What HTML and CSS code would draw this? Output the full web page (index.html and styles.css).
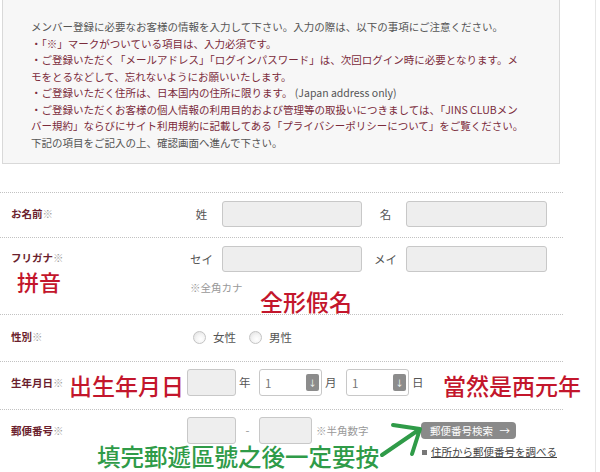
FILE: index.html
```html
<!DOCTYPE html>
<html lang="ja">

<head>
    <meta charset="UTF-8" />
    <title>会員登録</title>
    <link rel="stylesheet" href="styles.css">
</head>

<body>
    <div class="page">
        <div class="main">
            <div class="notice">
                <p class="notice-text">
                    メンバー登録に必要なお客様の情報を入力して下さい。入力の際は、以下の事項にご注意ください。<br>
                    <span class="warn">・「※」マークがついている項目は、入力必須です。</span><br>
                    <span class="warn">・ご登録いただく「メールアドレス」「ログインパスワード」は、次回ログイン時に必要となります。メ</span><br>
                    <span class="warn">モをとるなどして、忘れないようにお願いいたします。</span><br>
                    <span class="warn">・ご登録いただく住所は、日本国内の住所に限ります。</span>&nbsp;(Japan address only)<br>
                    <span class="warn">・ご登録いただくお客様の個人情報の利用目的および管理等の取扱いにつきましては、「JINS CLUBメン</span><br>
                    <span class="warn">バー規約」ならびにサイト利用規約に記載してある「プライバシーポリシーについて」をご覧ください。</span><br>
                    下記の項目をご記入の上、確認画面へ進んで下さい。
                </p>
            </div>

            <div class="form">
                <!-- name -->
                <div class="row row-name">
                    <div class="label"><span class="label-text">お名前<span class="req">※</span></span></div>
                    <div class="field">
                        <span class="sub">姓</span>
                        <input type="text" class="text" />
                        <span class="sub sub-2">名</span>
                        <input type="text" class="text text-2" />
                    </div>
                </div>

                <!-- kana -->
                <div class="row row-kana">
                    <div class="label">
                        <span class="label-text">フリガナ<span class="req">※</span></span>
                        <span class="red-note pinyin">拼音</span>
                    </div>
                    <div class="field field-col">
                        <div class="field-line">
                            <span class="sub">セイ</span>
                            <input type="text" class="text" />
                            <span class="sub sub-2">メイ</span>
                            <input type="text" class="text text-2" />
                        </div>
                        <div class="hint hint-kana">※全角カナ</div>
                    </div>
                    <span class="red-note kana-note">全形假名</span>
                </div>

                <!-- gender -->
                <div class="row row-gender">
                    <div class="label"><span class="label-text">性別<span class="req">※</span></span></div>
                    <div class="field">
                        <label class="radio-item"><input type="radio" name="gender" class="radio" />女性</label>
                        <label class="radio-item"><input type="radio" name="gender" class="radio" />男性</label>
                    </div>
                </div>

                <!-- birthday -->
                <div class="row row-date">
                    <div class="label label-split">
                        <span class="label-text">生年月日<span class="req">※</span></span>
                        <span class="red-note">出生年月日</span>
                    </div>
                    <div class="field">
                        <input type="text" class="num" />
                        <span class="unit">年</span>
                        <div class="select">
                            <select>
                                <option>1</option>
                            </select>
                            <span class="select-arrow">↓</span>
                        </div>
                        <span class="unit unit-month">月</span>
                        <div class="select">
                            <select>
                                <option>1</option>
                            </select>
                            <span class="select-arrow">↓</span>
                        </div>
                        <span class="unit">日</span>
                        <span class="red-note year-note">當然是西元年</span>
                    </div>
                </div>

                <!-- zip -->
                <div class="row row-zip">
                    <div class="label"><span class="label-text">郵便番号<span class="req">※</span></span></div>
                    <div class="field">
                        <input type="text" class="num" />
                        <span class="dash">-</span>
                        <input type="text" class="num num-2" />
                        <span class="hint hint-zip">※半角数字</span>
                        <div class="zip-tools">
                            <button class="zip-btn"><span>郵便番号検索</span><span>→</span></button>
                            <a class="zip-link" href="#"><span class="bullet"></span><span class="link-text">住所から郵便番号を調べる</span></a>
                        </div>
                    </div>
                    <span class="green-note">填完郵遞區號之後一定要按</span>
                    <svg class="green-arrow" viewBox="0 0 48 45" width="48" height="45">
                        <path d="M4 38 L42 12 M15 8 L42 12 L34 37" fill="none" stroke="#2f9b48" stroke-width="4"
                            stroke-linecap="round" stroke-linejoin="round" />
                    </svg>
                </div>
            </div>
        </div>
    </div>
</body>

</html>
```

FILE: styles.css
```css
body {
    margin: 0;
    font-family: "Noto Sans CJK JP", "Noto Sans", sans-serif;
    color: #555;
    background-color: #fff;
}

.page {
    width: 595px;
    height: 472px;
    overflow: hidden;
    border-right: 1px solid #e6e6e6;
}

.main {
    width: 563px;
}

/* notice box at the top */
.notice {
    margin-left: 2px;
    width: 558px;
    box-sizing: border-box;
    background-color: #f7f7f7;
    border: 1px solid #d9d9d9;
    border-top: none;
    padding: 19px 0 12px 28px;
}

.notice-text {
    margin: 0;
    font-size: 10.5px;
    line-height: 16.5px;
    white-space: nowrap;
    color: #555;
}

.warn {
    color: #7b2b3b;
}

/* form rows */
.form {
    margin-top: 28px;
}

.row {
    display: flex;
    position: relative;
    border-top: 1px dotted #c2c2c2;
    padding: 8px 0 10px;
}

.label {
    width: 187px;
    flex-shrink: 0;
    box-sizing: border-box;
    padding-left: 11px;
    font-size: 10.5px;
    font-weight: bold;
    color: #6b1f2e;
}

.label-text {
    display: block;
    line-height: 26px;
}

.req {
    color: #a0a0a0;
    font-weight: normal;
}

.field {
    display: flex;
    align-items: flex-start;
    font-size: 11.5px;
    color: #555;
}

.field-col {
    flex-direction: column;
}

.field-line {
    display: flex;
}

.sub {
    width: 29px;
    margin-right: 6px;
    text-align: center;
    line-height: 26px;
}

.sub-2 {
    margin-left: 9px;
}

.text {
    box-sizing: border-box;
    width: 140px;
    height: 26px;
    margin: 0;
    padding: 0 5px;
    border: 1px solid #c8c8c8;
    border-radius: 3px;
    background-color: #eee;
}

.text-2 {
    width: 141px;
}

.hint {
    font-size: 10.5px;
    color: #999;
}

.hint-kana {
    margin-top: 9px;
    padding-left: 3px;
    line-height: 14px;
}

.row-kana {
    height: 77px;
    box-sizing: border-box;
    padding-bottom: 0;
}

.row-kana .label-text {
    line-height: 15px;
    margin-top: 4px;
}

/* annotations written over the screenshot */
.red-note {
    font-family: "Noto Sans CJK TC", sans-serif;
    font-weight: 500;
    font-size: 23px;
    line-height: 27px;
    color: #c3162c;
    white-space: nowrap;
}

.pinyin {
    display: block;
    font-size: 22px;
    line-height: 32px;
    padding-left: 6px;
}

.kana-note {
    position: absolute;
    left: 260px;
    top: 52px;
    line-height: 23px;
}

.green-note {
    position: absolute;
    left: 97px;
    top: 35px;
    font-family: "Noto Sans CJK TC", sans-serif;
    font-weight: 500;
    font-size: 23.5px;
    line-height: 23px;
    color: #2f9b48;
    white-space: nowrap;
}

.green-arrow {
    position: absolute;
    left: 378px;
    top: 7px;
}

/* gender */
.row-gender {
    padding: 9px 0 11px;
}

.radio-item {
    display: flex;
    align-items: center;
    line-height: 26px;
    margin-right: 13px;
}

.radio {
    appearance: none;
    width: 13px;
    height: 13px;
    margin: 0 7px 0 6px;
    border: 1px solid #c4c4c4;
    border-radius: 50%;
    box-sizing: border-box;
    background: radial-gradient(circle at 60% 65%, #fff 0%, #f4f4f4 45%, #dcdcdc 100%);
}

.radio-item + .radio-item .radio {
    margin-left: 0;
}

/* birthday */
.row-date {
    padding: 7px 0 10px;
}

.row-date .label-text,
.row-zip .label-text {
    line-height: 27px;
}

.label-split {
    display: flex;
    justify-content: space-between;
    padding-right: 3px;
}

.label-split .red-note {
    margin-top: 3px;
}

.num {
    box-sizing: border-box;
    width: 49px;
    height: 27px;
    margin: 0;
    border: 1px solid #c8c8c8;
    border-radius: 3px;
    background-color: #eee;
}

.num-2 {
    width: 53px;
}

.unit {
    width: 23px;
    box-sizing: border-box;
    padding-left: 3px;
    line-height: 27px;
}

.unit-month {
    width: 24px;
}

.select {
    position: relative;
    width: 63px;
    height: 27px;
}

.select select {
    appearance: none;
    width: 100%;
    height: 100%;
    margin: 0;
    padding: 0 0 0 5px;
    border: 1px solid #c8c8c8;
    border-radius: 3px;
    background-color: #fff;
    font-family: inherit;
    font-size: 11.5px;
    color: #777;
}

.select-arrow {
    position: absolute;
    right: 3px;
    top: 5px;
    width: 13px;
    height: 17px;
    border-radius: 2px;
    background-color: #8c8c8c;
    color: #fff;
    font-size: 8px;
    line-height: 17px;
    text-align: center;
    pointer-events: none;
}

.year-note {
    margin-left: 11px;
    margin-top: 3px;
}

/* zip */
.row-zip {
    padding: 7px 0 10px;
}

.dash {
    width: 23px;
    text-align: center;
    line-height: 27px;
    color: #999;
}

.hint-zip {
    width: 109px;
    box-sizing: border-box;
    padding-left: 4px;
    line-height: 27px;
}

.zip-tools {
    display: flex;
    flex-direction: column;
    align-items: flex-start;
    margin-top: 5px;
}

.zip-btn {
    display: flex;
    justify-content: space-between;
    align-items: center;
    box-sizing: border-box;
    width: 95px;
    height: 17px;
    padding: 0 6px 0 9px;
    border: none;
    border-radius: 4px;
    background-color: #8a8a8a;
    color: #fff;
    font-family: inherit;
    font-size: 10.5px;
    cursor: pointer;
}

.zip-link {
    display: flex;
    align-items: center;
    margin-top: 6px;
    font-size: 10.5px;
    line-height: 14px;
    color: #444;
    text-decoration: none;
}

.bullet {
    width: 5px;
    height: 5px;
    margin: 0 4px 0 1px;
    background-color: #777;
}

.link-text {
    text-decoration: underline;
}
```
